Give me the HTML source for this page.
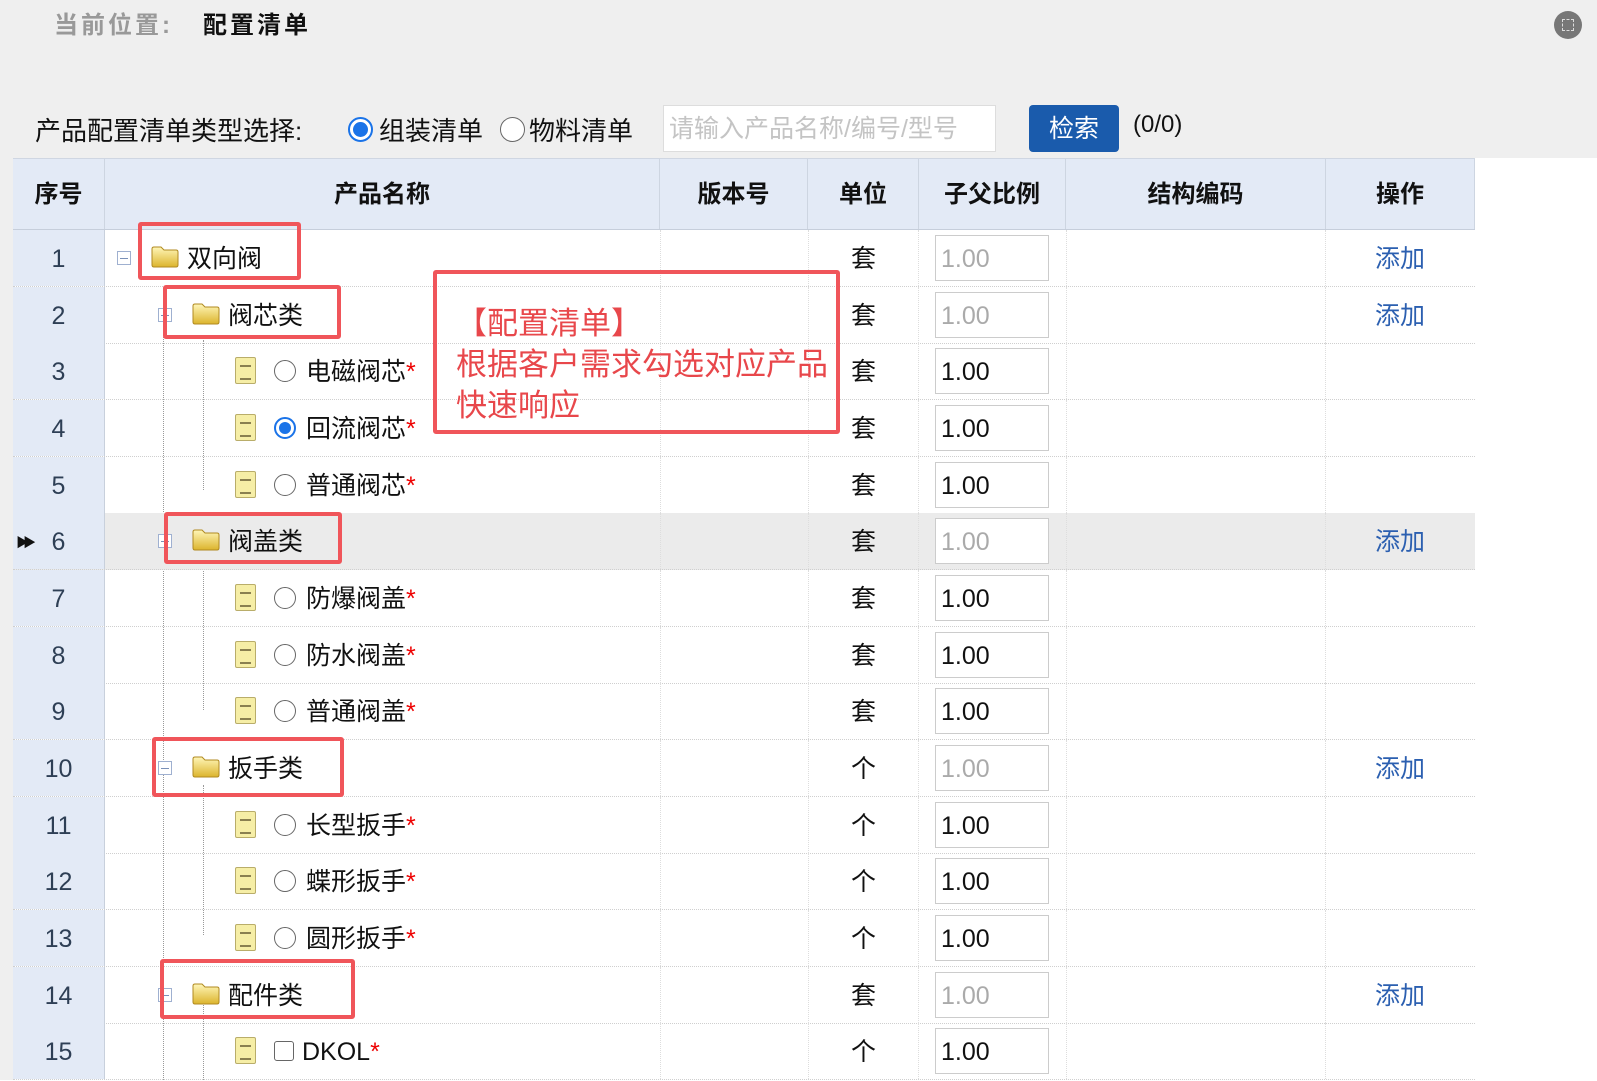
<!DOCTYPE html>
<html><head><meta charset="utf-8">
<style>
*{margin:0;padding:0;box-sizing:border-box}
body{width:1597px;height:1080px;overflow:hidden;background:#fff;font-family:"Liberation Sans","Noto Sans CJK SC",sans-serif;position:relative;color:#111}
.top{position:absolute;left:0;top:0;width:1597px;height:158px;background:#efefef}
.abs{position:absolute}
.hdr{position:absolute;left:13px;top:158px;width:1462px;height:72px;background:#e3eaf6;border-top:1px solid #cfd6e2;border-bottom:1px solid #c6cedb}
.hdr div{position:absolute;top:0;height:70px;line-height:72px;text-align:center;font-weight:bold;font-size:24px;border-right:1px solid #cdd5e1}
.r{position:absolute;left:13px;width:1462px;height:57px;border-bottom:1px dotted #cfcfcf}
.r>div{position:absolute;top:0;height:56px;line-height:58px;font-size:25px}
.n{left:0;width:92px;background:#e3eaf6;text-align:center;color:#2e3f55;border-right:1px solid #c8d0dc}
.u{left:795px;width:111px;text-align:center;border-left:1px dotted #ddd;border-right:1px dotted #ddd}
.cd{left:1053px;width:260px;border-left:1px dotted #ddd;border-right:1px dotted #ddd;}
.nmc{left:647px;width:148px;border-left:1px dotted #ddd}
.in{left:922px!important;top:5px!important;width:114px;height:46px!important;line-height:46px!important;border:1px solid #ccc;background:#fff;padding-left:5px;color:#111}
.in.g{color:#aaa}
.op{left:1313px;width:148px;text-align:center;color:#2b5fb0}
.t{white-space:nowrap}
.folder{position:absolute;top:15px;width:30px;height:24px}
.doc{position:absolute;top:14px;width:21px;height:27px;background:#f6eea6;border:1px solid #b9ad6a;border-radius:2px}
.doc:after{content:"";position:absolute;left:4px;top:7px;width:11px;height:11px;border-top:2px solid #8a8050;border-bottom:2px solid #8a8050}
.rad{position:absolute;top:17px;width:22px;height:22px;border:1.5px solid #666;border-radius:50%;background:#fff}
.rad.on{border:2px solid #1a73e8}
.rad.on:after{content:"";position:absolute;left:3px;top:3px;width:12px;height:12px;border-radius:50%;background:#1a73e8}
.st{color:#e00}
.mn{position:absolute;top:21px;width:14px;height:14px;border:1px solid #9fb0d0;background:#fff}
.mn:after{content:"";position:absolute;left:2px;top:6px;width:8px;height:1px;background:#7a90b8}
.rb{position:absolute;border:4px solid #f0555a;border-radius:3px}
.lv{position:absolute;left:70px}
.lf{position:absolute;left:71px}
</style></head><body>
<div class="top"></div>
<div class="abs" style="left:54px;top:5px;font-size:24px;font-weight:bold;color:#999;letter-spacing:3px">当前位置:</div>
<div class="abs" style="left:203px;top:5px;font-size:24px;font-weight:bold;color:#111;letter-spacing:3px">配置清单</div>
<div class="abs" style="left:1554px;top:11px;width:28px;height:28px;border-radius:50%;background:#777"><div style="position:absolute;left:8px;top:8px;width:12px;height:12px;border:1px dashed #ddd"></div></div>
<div class="abs" style="left:35px;top:111px;font-size:26px">产品配置清单类型选择:</div>
<div class="abs" style="left:348px;top:117px;width:25px;height:25px;border-radius:50%;border:2px solid #1a73e8;background:#fff"><div style="position:absolute;left:3px;top:3px;width:15px;height:15px;border-radius:50%;background:#1a73e8"></div></div>
<div class="abs" style="left:379px;top:111px;font-size:26px">组装清单</div>
<div class="abs" style="left:500px;top:117px;width:25px;height:25px;border-radius:50%;border:1.5px solid #666;background:#fff"></div>
<div class="abs" style="left:529px;top:111px;font-size:26px">物料清单</div>
<div class="abs" style="left:663px;top:105px;width:333px;height:47px;background:#fff;border:1px solid #ddd;font-size:25px;color:#c4c4c4;line-height:46px;padding-left:5px">请输入产品名称/编号/型号</div>
<div class="abs" style="left:1029px;top:105px;width:90px;height:47px;background:#1a5bac;border-radius:4px;color:#fff;font-size:25px;line-height:48px;text-align:center">检索</div>
<div class="abs" style="left:1133px;top:111px;font-size:24px">(0/0)</div>
<div class="abs" style="left:0;top:158px;width:13px;height:922px;background:#efefef"></div>
<div class="hdr">
<div style="left:0;width:92px">序号</div>
<div style="left:92px;width:555px">产品名称</div>
<div style="left:647px;width:148px">版本号</div>
<div style="left:795px;width:111px">单位</div>
<div style="left:906px;width:147px">子父比例</div>
<div style="left:1053px;width:260px">结构编码</div>
<div style="left:1313px;width:149px">操作</div>
</div>

<svg width="0" height="0" style="position:absolute"><defs><linearGradient id="fg" x1="0" y1="0" x2="0" y2="1"><stop offset="0" stop-color="#fff6b8"/><stop offset="1" stop-color="#dcb42c"/></linearGradient></defs></svg>

<div class="abs" style="left:163px;top:290px;height:790px;border-left:1px dotted #999"></div>
<div class="abs" style="left:203px;top:340px;height:150px;border-left:1px dotted #999"></div>
<div class="abs" style="left:203px;top:560px;height:150px;border-left:1px dotted #999"></div>
<div class="abs" style="left:203px;top:785px;height:150px;border-left:1px dotted #999"></div>
<div class="abs" style="left:203px;top:1005px;height:75px;border-left:1px dotted #999"></div>

<div class="r" style="top:230px"><div class="n">1</div><div class="nmc"></div><div class="t" style="left:104px;width:540px"><span class="mn" style="left:0"></span><svg class="folder" style="left:33px" viewBox="0 0 30 24"><path d="M2 4q0-2 2-2h7l3 3h12q2 0 2 2v13q0 2-2 2H4q-2 0-2-2z" fill="url(#fg)" stroke="#b08a20"/></svg><span class="lv">双向阀</span></div><div class="u">套</div><div class="in g">1.00</div><div class="cd"></div><div class="op">添加</div></div>
<div class="r" style="top:287px"><div class="n">2</div><div class="nmc"></div><div class="t" style="left:145px;width:500px"><span class="mn" style="left:0"></span><svg class="folder" style="left:33px" viewBox="0 0 30 24"><path d="M2 4q0-2 2-2h7l3 3h12q2 0 2 2v13q0 2-2 2H4q-2 0-2-2z" fill="url(#fg)" stroke="#b08a20"/></svg><span class="lv">阀芯类</span></div><div class="u">套</div><div class="in g">1.00</div><div class="cd"></div><div class="op">添加</div></div>
<div class="r" style="top:343px"><div class="n">3</div><div class="nmc"></div><div class="t" style="left:222px;width:420px"><span class="doc" style="left:0"></span><span class="rad" style="left:39px"></span><span class="lf">电磁阀芯<span class="st">*</span></span></div><div class="u">套</div><div class="in">1.00</div><div class="cd"></div></div>
<div class="r" style="top:400px"><div class="n">4</div><div class="nmc"></div><div class="t" style="left:222px;width:420px"><span class="doc" style="left:0"></span><span class="rad on" style="left:39px"></span><span class="lf">回流阀芯<span class="st">*</span></span></div><div class="u">套</div><div class="in">1.00</div><div class="cd"></div></div>
<div class="r" style="top:457px"><div class="n">5</div><div class="nmc"></div><div class="t" style="left:222px;width:420px"><span class="doc" style="left:0"></span><span class="rad" style="left:39px"></span><span class="lf">普通阀芯<span class="st">*</span></span></div><div class="u">套</div><div class="in">1.00</div><div class="cd"></div></div>
<div class="r" style="top:513px;background:#ebebeb"><div class="n">6</div><div class="nmc"></div><div class="t" style="left:145px;width:500px"><span class="mn" style="left:0"></span><svg class="folder" style="left:33px" viewBox="0 0 30 24"><path d="M2 4q0-2 2-2h7l3 3h12q2 0 2 2v13q0 2-2 2H4q-2 0-2-2z" fill="url(#fg)" stroke="#b08a20"/></svg><span class="lv">阀盖类</span></div><div class="u">套</div><div class="in g">1.00</div><div class="cd"></div><div class="op">添加</div></div>
<div class="abs" style="left:16px;top:532px;font-size:13px;letter-spacing:-6px">▶▶</div>
<div class="r" style="top:570px"><div class="n">7</div><div class="nmc"></div><div class="t" style="left:222px;width:420px"><span class="doc" style="left:0"></span><span class="rad" style="left:39px"></span><span class="lf">防爆阀盖<span class="st">*</span></span></div><div class="u">套</div><div class="in">1.00</div><div class="cd"></div></div>
<div class="r" style="top:627px"><div class="n">8</div><div class="nmc"></div><div class="t" style="left:222px;width:420px"><span class="doc" style="left:0"></span><span class="rad" style="left:39px"></span><span class="lf">防水阀盖<span class="st">*</span></span></div><div class="u">套</div><div class="in">1.00</div><div class="cd"></div></div>
<div class="r" style="top:683px"><div class="n">9</div><div class="nmc"></div><div class="t" style="left:222px;width:420px"><span class="doc" style="left:0"></span><span class="rad" style="left:39px"></span><span class="lf">普通阀盖<span class="st">*</span></span></div><div class="u">套</div><div class="in">1.00</div><div class="cd"></div></div>
<div class="r" style="top:740px"><div class="n">10</div><div class="nmc"></div><div class="t" style="left:145px;width:500px"><span class="mn" style="left:0"></span><svg class="folder" style="left:33px" viewBox="0 0 30 24"><path d="M2 4q0-2 2-2h7l3 3h12q2 0 2 2v13q0 2-2 2H4q-2 0-2-2z" fill="url(#fg)" stroke="#b08a20"/></svg><span class="lv">扳手类</span></div><div class="u">个</div><div class="in g">1.00</div><div class="cd"></div><div class="op">添加</div></div>
<div class="r" style="top:797px"><div class="n">11</div><div class="nmc"></div><div class="t" style="left:222px;width:420px"><span class="doc" style="left:0"></span><span class="rad" style="left:39px"></span><span class="lf">长型扳手<span class="st">*</span></span></div><div class="u">个</div><div class="in">1.00</div><div class="cd"></div></div>
<div class="r" style="top:853px"><div class="n">12</div><div class="nmc"></div><div class="t" style="left:222px;width:420px"><span class="doc" style="left:0"></span><span class="rad" style="left:39px"></span><span class="lf">蝶形扳手<span class="st">*</span></span></div><div class="u">个</div><div class="in">1.00</div><div class="cd"></div></div>
<div class="r" style="top:910px"><div class="n">13</div><div class="nmc"></div><div class="t" style="left:222px;width:420px"><span class="doc" style="left:0"></span><span class="rad" style="left:39px"></span><span class="lf">圆形扳手<span class="st">*</span></span></div><div class="u">个</div><div class="in">1.00</div><div class="cd"></div></div>
<div class="r" style="top:967px"><div class="n">14</div><div class="nmc"></div><div class="t" style="left:145px;width:500px"><span class="mn" style="left:0"></span><svg class="folder" style="left:33px" viewBox="0 0 30 24"><path d="M2 4q0-2 2-2h7l3 3h12q2 0 2 2v13q0 2-2 2H4q-2 0-2-2z" fill="url(#fg)" stroke="#b08a20"/></svg><span class="lv">配件类</span></div><div class="u">套</div><div class="in g">1.00</div><div class="cd"></div><div class="op">添加</div></div>
<div class="r" style="top:1023px"><div class="n">15</div><div class="nmc"></div><div class="t" style="left:222px;width:420px"><span class="doc" style="left:0"></span><span style="position:absolute;left:39px;top:18px;width:20px;height:20px;border:1.5px solid #666;border-radius:3px;background:#fff"></span><span class="lf" style="left:67px">DKOL<span class="st">*</span></span></div><div class="u">个</div><div class="in">1.00</div><div class="cd"></div></div>

<div class="rb" style="left:138px;top:222px;width:163px;height:58px"></div>
<div class="rb" style="left:163px;top:285px;width:178px;height:54px"></div>
<div class="rb" style="left:164px;top:512px;width:178px;height:52px"></div>
<div class="rb" style="left:152px;top:737px;width:192px;height:60px"></div>
<div class="rb" style="left:160px;top:959px;width:195px;height:60px"></div>
<div class="rb" style="left:433px;top:270px;width:407px;height:164px"></div>
<div class="abs" style="left:456px;top:303px;font-size:31px;line-height:41px;color:#e8474b;white-space:nowrap">【配置清单】<br>根据客户需求勾选对应产品<br>快速响应</div>
</body></html>
